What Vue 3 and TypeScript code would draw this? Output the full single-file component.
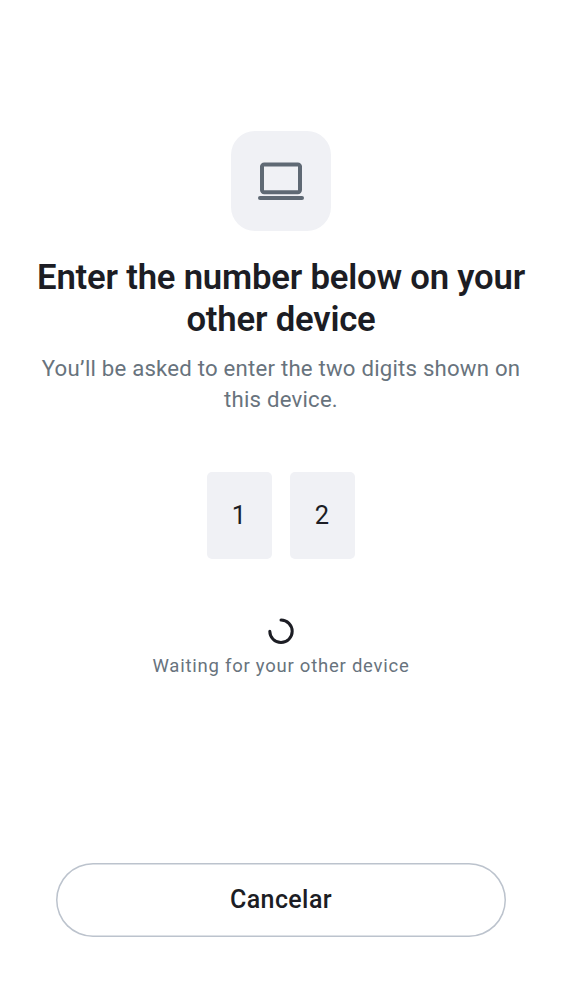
<script setup lang="ts">
const digits: string[] = ['1', '2']
</script>

<template>
  <main class="screen">
    <div class="device">
      <svg width="48" height="40" viewBox="0 0 48 40" fill="none" stroke="#5f6974" stroke-width="4">
        <rect x="5" y="3.4" width="38" height="27.8" rx="2.2" />
        <path d="M3 37H45" stroke-linecap="round" />
      </svg>
    </div>
    <h1>Enter the number below on your<br />other device</h1>
    <p class="description">You’ll be asked to enter the two digits shown on<br />this device.</p>
    <div class="digits">
      <span v-for="digit in digits" :key="digit" class="digit">{{ digit }}</span>
    </div>
    <div class="status">
      <svg width="28" height="28" viewBox="0 0 28 28" fill="none" stroke="#1c1d24" stroke-width="3" stroke-linecap="round">
        <path d="M14 3.1A11.2 11.2 0 1 1 2.8 14.3" />
      </svg>
      <p>Waiting for your other device</p>
    </div>
    <button class="cancel" type="button">Cancelar</button>
  </main>
</template>

<style>
body { background: #fff; }
</style>

<style scoped>
.screen { box-sizing: border-box; height: 1000px; padding: 131px 0 63px; display: flex; flex-direction: column; align-items: center; font-family: Roboto, sans-serif; color: #1c1d24; text-align: center; }
.device { width: 100px; height: 100px; border-radius: 24px; background: #f0f1f5; display: flex; align-items: center; justify-content: center; }
h1 { margin: 25px 0 0; font-size: 34.7px; line-height: 42px; font-weight: 600; letter-spacing: -.2px; white-space: nowrap; }
.description { margin: 13px 0 0; font-size: 22.2px; line-height: 31px; letter-spacing: .21px; color: #68737d; white-space: nowrap; }
.digits { display: flex; gap: 18px; margin-top: 57px; }
.digit { box-sizing: border-box; width: 65px; height: 87px; padding: 0 1px 1px 0; border-radius: 5px; background: #f0f1f5; display: flex; align-items: center; justify-content: center; font-size: 25.5px; }
.status { margin-top: 58px; display: flex; flex-direction: column; align-items: center; }
.status p { margin: 9px 0 0; font-size: 18.5px; line-height: 24px; letter-spacing: .76px; color: #68737d; white-space: nowrap; }
.cancel { width: 450px; height: 74.5px; margin-top: auto; padding: 0; border: 0; border-radius: 38px; background: #fff; box-shadow: inset 0 0 0 1.5px #bcc3cd; color: #1c1d24; font: 500 25px Roboto, sans-serif; letter-spacing: .4px; }
</style>
